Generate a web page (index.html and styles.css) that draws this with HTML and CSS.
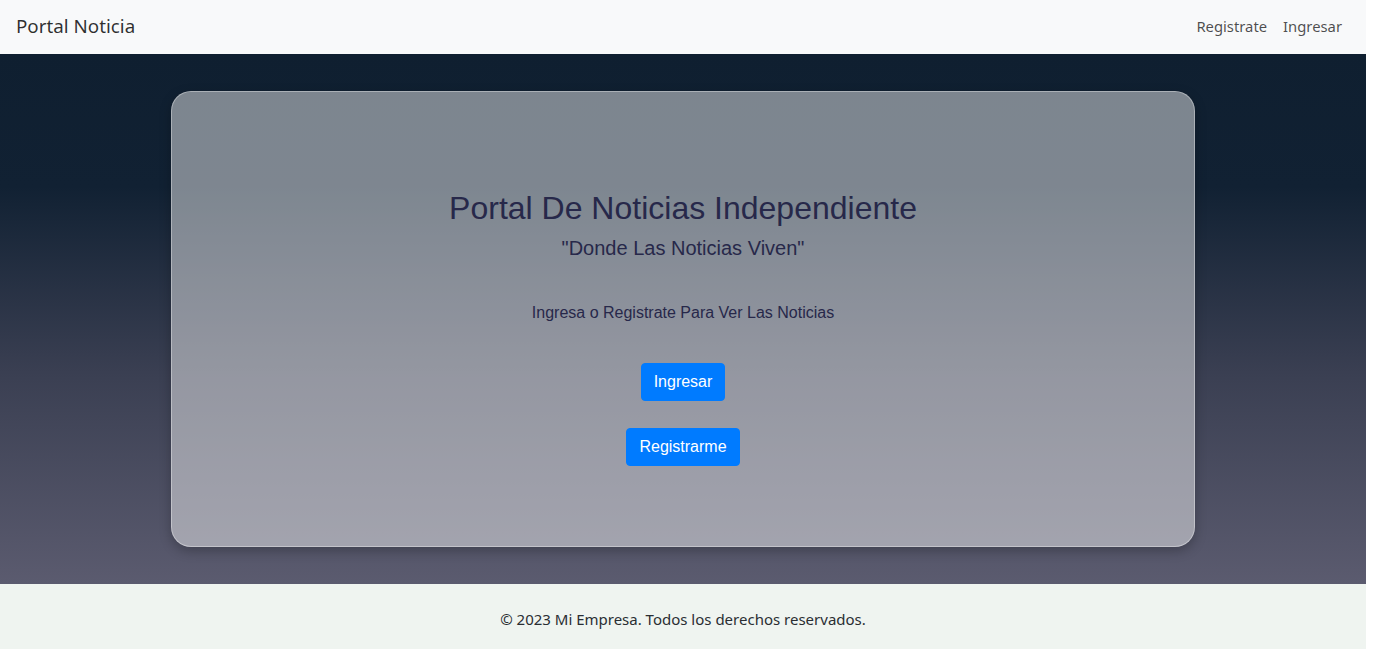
FILE: index.html
```html
<!DOCTYPE html>
<html lang="es">
<head>
<meta charset="utf-8">
<title>Portal Noticia</title>
<link rel="stylesheet" href="styles.css">
</head>
<body>
<div class="page">
  <nav class="navbar">
    <a class="brand" href="#">Portal Noticia</a>
    <div class="nav-links">
      <a class="nav-link" href="#">Registrate</a>
      <a class="nav-link" href="#">Ingresar</a>
    </div>
  </nav>
  <main class="hero">
    <section class="card">
      <h1 class="title">Portal De Noticias Independiente</h1>
      <h2 class="subtitle">"Donde Las Noticias Viven"</h2>
      <p class="lead">Ingresa o Registrate Para Ver Las Noticias</p>
      <div class="actions">
        <a class="btn" href="#">Ingresar</a>
        <a class="btn" href="#">Registrarme</a>
      </div>
    </section>
  </main>
  <footer class="footer">
    <p>© 2023 Mi Empresa. Todos los derechos reservados.</p>
  </footer>
</div>
</body>
</html>
```

FILE: styles.css
```css
html, body {
  margin: 0;
  padding: 0;
  background: #ffffff;
}

.page {
  margin-right: 8px;
  font-family: "Noto Sans", "Segoe UI", sans-serif;
}

.navbar {
  height: 54px;
  box-sizing: border-box;
  background: #f8f9fa;
  display: flex;
  align-items: center;
  justify-content: space-between;
  padding: 0 16px 2px;
}

.brand {
  font-size: 18.8px;
  color: rgba(0, 0, 0, 0.82);
  text-decoration: none;
  line-height: 30px;
}

.nav-links {
  display: flex;
}

.nav-link {
  font-size: 14.8px;
  color: rgba(0, 0, 0, 0.7);
  text-decoration: none;
  padding: 8px;
  line-height: 24px;
}

.hero {
  height: 530px;
  box-sizing: border-box;
  padding: 37px 0;
  background: linear-gradient(to bottom, #0f1f30 0%, #112133 25%, #3a3f52 60%, #5b5b6f 100%);
  display: flex;
  justify-content: center;
}

.card {
  width: 1024px;
  box-sizing: border-box;
  padding: 97px 40px 80px;
  background: rgba(255, 255, 255, 0.46);
  border: 1px solid rgba(255, 255, 255, 0.35);
  border-radius: 20px;
  box-shadow: 0 4px 12px rgba(0, 0, 0, 0.25);
  display: flex;
  flex-direction: column;
  align-items: center;
  font-family: "Liberation Sans", Arial, sans-serif;
  color: #27284a;
  text-align: center;
}

.title {
  margin: 0;
  font-size: 32px;
  font-weight: 400;
  line-height: 38px;
}

.subtitle {
  margin: 9px 0 0;
  font-size: 20px;
  font-weight: 400;
  line-height: 24px;
}

.lead {
  margin: 41px 0 0;
  font-size: 16px;
  line-height: 24px;
}

.actions {
  margin-top: 38px;
  display: flex;
  flex-direction: column;
  align-items: center;
  gap: 27px;
}

.btn {
  display: inline-block;
  padding: 6px 12px;
  font-size: 16px;
  line-height: 24px;
  color: #ffffff;
  background: #007bff;
  border: 1px solid #007bff;
  border-radius: 4px;
  text-decoration: none;
}

.footer {
  height: 65px;
  background: #eff4f0;
  display: flex;
  align-items: center;
  justify-content: center;
}

.footer p {
  margin: 0;
  font-size: 15px;
  color: #2a2e33;
  line-height: 24px;
  padding-top: 4px;
}
```
